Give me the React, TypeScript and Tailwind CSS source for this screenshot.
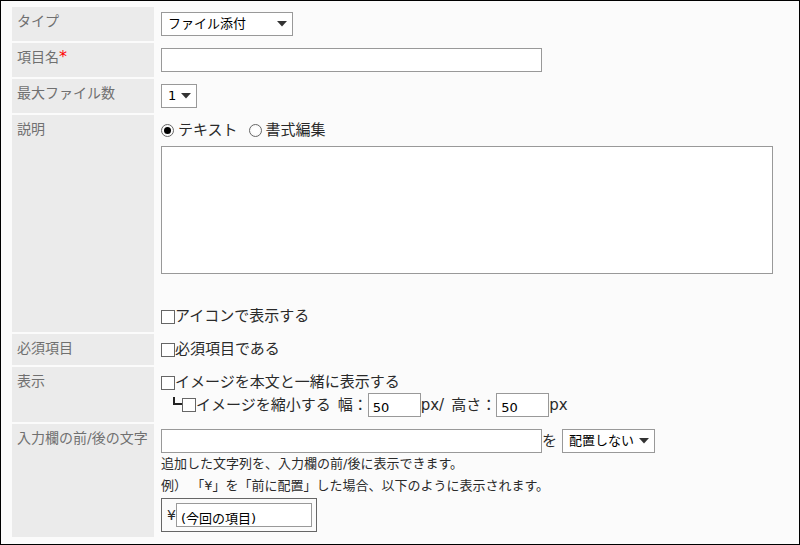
import type { ComponentProps, ReactNode } from "react";

type RowProps = {
  title: string;
  htmlFor?: string;
  required?: boolean;
  children: ReactNode;
};

const Row = ({ title, htmlFor, required, children }: RowProps) => (
  <div className="flex">
    <div className="w-[142px] shrink-0 bg-[#ebebeb] px-[5px] pt-1 text-sm leading-5 whitespace-nowrap text-[#707070]">
      {htmlFor ? <label htmlFor={htmlFor}>{title}</label> : <span>{title}</span>}
      {required && <span className="text-base leading-4 text-[#f00]">*</span>}
    </div>
    <div className="min-w-0 grow py-[5px] pl-[7px]">{children}</div>
  </div>
);

const TextBox = ({ className, ...props }: ComponentProps<"input">) => (
  <input
    type="text"
    className={`block h-6 border border-[#999] bg-white px-1 pt-1 text-[13px] text-black ${className}`}
    {...props}
  />
);

const Select = ({ className, children, ...props }: ComponentProps<"select">) => (
  <div className={`relative h-6 ${className}`}>
    <select
      className="block h-6 w-full appearance-none border border-[#999] bg-white pl-[6px] text-[13px] leading-5 text-black"
      {...props}
    >
      {children}
    </select>
    <svg
      className="pointer-events-none absolute top-[9px] right-[6px] h-[6px] w-[10px] fill-[#333]"
      viewBox="0 0 10 6"
    >
      <path d="M0 0h10L5 5.5z" />
    </svg>
  </div>
);

const Check = ({ label }: { label: string }) => (
  <label className="flex h-[21px] items-center">
    <input
      type="checkbox"
      className="size-[14px] shrink-0 appearance-none border border-[#666] bg-white checked:bg-[#333]"
    />
    {label}
  </label>
);

const Radio = ({ label, ...props }: { label: string } & ComponentProps<"input">) => (
  <label className="flex items-center gap-1">
    <input
      type="radio"
      name="format"
      className="size-[13px] shrink-0 appearance-none rounded-full border border-[#666] bg-white bg-clip-content p-[2px] checked:bg-black"
      {...props}
    />
    {label}
  </label>
);

export default function App() {
  return (
    <form className="flex flex-col gap-[2px] border border-black bg-[#fbfbfb] pt-[6px] pb-[7px] pl-[11px] font-['DejaVu_Sans','Noto_Sans_CJK_JP',sans-serif] text-[15px] leading-[21px] text-[#2a2a2a]">
      <Row title="タイプ" htmlFor="type">
        <Select id="type" className="w-[132px]">
          <option>ファイル添付</option>
        </Select>
      </Row>

      <Row title="項目名" htmlFor="name" required>
        <TextBox id="name" className="w-[381px]" />
      </Row>

      <Row title="最大ファイル数" htmlFor="max">
        <Select id="max" className="w-9">
          <option>1</option>
        </Select>
      </Row>

      <Row title="説明" htmlFor="description">
        <div className="flex h-[21px] gap-[11px]">
          <Radio label="テキスト" defaultChecked />
          <Radio label="書式編集" />
        </div>
        <textarea
          id="description"
          className="mt-[5px] mb-8 block h-32 w-[612px] max-w-full resize-none border border-[#999] bg-white p-1 text-[13px]"
        />
        <Check label="アイコンで表示する" />
      </Row>

      <Row title="必須項目">
        <Check label="必須項目である" />
      </Row>

      <Row title="表示">
        <Check label="イメージを本文と一緒に表示する" />
        <div className="flex items-center pl-3">
          <svg className="mb-2 h-[9px] w-[9px] fill-[#222]" viewBox="0 0 9 9">
            <path d="M0 0h2v6h7v2H0z" />
          </svg>
          <Check label="イメージを縮小する" />
          <label htmlFor="width" className="pl-[7px]">
            幅：
          </label>
          <TextBox id="width" className="w-[53px]" defaultValue="50" />
          <span>px/</span>
          <label htmlFor="height" className="pl-[7px]">
            高さ：
          </label>
          <TextBox id="height" className="w-[53px]" defaultValue="50" />
          <span>px</span>
        </div>
      </Row>

      <Row title="入力欄の前/後の文字" htmlFor="affix">
        <div className="flex items-center">
          <TextBox id="affix" className="w-[381px]" />
          <label htmlFor="position" className="pr-[5px]">
            を
          </label>
          <Select id="position" className="w-[93px]">
            <option>配置しない</option>
          </Select>
        </div>
        <p className="text-[13px] leading-[22px]">
          追加した文字列を、入力欄の前/後に表示できます。
        </p>
        <p className="text-[13px] leading-[22px]">
          例） 「¥」を「前に配置」した場合、以下のように表示されます。
        </p>
        <div className="mt-px flex w-fit items-center border border-[#666] py-1 pr-1 pl-[5px]">
          <label htmlFor="sample" className="text-sm">
            ¥
          </label>
          <TextBox id="sample" className="w-[136px]" defaultValue="(今回の項目)" />
        </div>
      </Row>
    </form>
  );
}
